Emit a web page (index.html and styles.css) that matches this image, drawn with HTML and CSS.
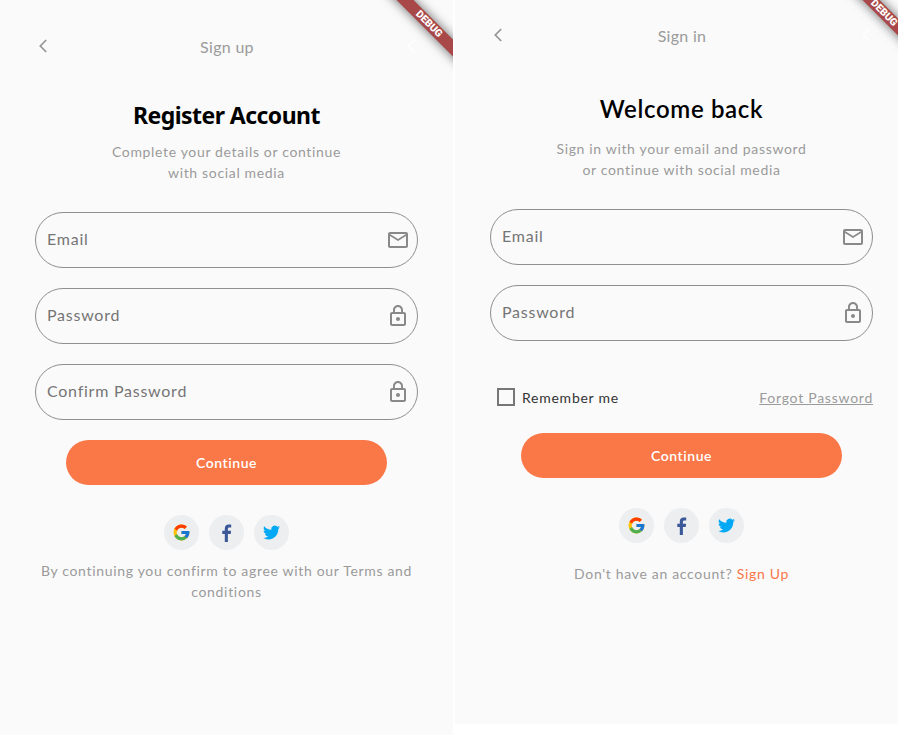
FILE: index.html
```
<!DOCTYPE html>
<html lang="en">
<head>
<meta charset="utf-8">
<title>Sign up and sign in</title>
<link rel="stylesheet" href="styles.css">
</head>
<body>
<svg class="defs" aria-hidden="true">
  <symbol id="back" viewBox="0 0 8 14"><path d="M7.2 1 1.3 7l5.9 6" fill="none" stroke="currentColor" stroke-width="1.7"/></symbol>
  <symbol id="mail" viewBox="0 0 24 24"><path fill="currentColor" d="M20 4H4c-1.100 0-1.990.9-1.990 2L2 18c0 1.100.9 2 2 2h16c1.100 0 2-.9 2-2V6c0-1.100-.9-2-2-2zm0 14H4V8l8 5 8-5v10zm-8-7L4 6h16l-8 5z"/></symbol>
  <symbol id="lock" viewBox="0 0 24 24"><path fill="currentColor" d="M12 17c1.100 0 2-.9 2-2s-.9-2-2-2-2 .9-2 2 .9 2 2 2zm6-9h-1V6c0-2.760-2.240-5-5-5S7 3.240 7 6v2H6c-1.100 0-2 .9-2 2v10c0 1.100.9 2 2 2h12c1.100 0 2-.9 2-2V10c0-1.100-.9-2-2-2zM8.900 6c0-1.710 1.390-3.100 3.100-3.100s3.100 1.390 3.100 3.100v2H8.900V6zM18 20H6V10h12v10z"/></symbol>
  <symbol id="google" viewBox="0 0 48 48"><path fill="#FFC107" d="M43.600 20H24v8h11.300C33.700 32.700 29.200 36 24 36c-6.600 0-12-5.400-12-12s5.400-12 12-12c3.100 0 5.800 1.200 8 3l5.700-5.700C34 6.100 29.300 4 24 4 13 4 4 13 4 24s9 20 20 20 20-9 20-20c0-1.300-.1-2.700-.4-4z"/><path fill="#FF3D00" d="m6.300 14.700 6.600 4.800C14.700 15.100 19 12 24 12c3.100 0 5.800 1.200 8 3l5.700-5.700C34 6.100 29.300 4 24 4 16.300 4 9.700 8.300 6.300 14.700z"/><path fill="#4CAF50" d="M24 44c5.200 0 9.900-2 13.400-5.200l-6.200-5.200C29.200 35.100 26.700 36 24 36c-5.200 0-9.600-3.300-11.300-8l-6.500 5C9.500 39.600 16.200 44 24 44z"/><path fill="#1976D2" d="M43.600 20H24v8h11.300a12 12 0 0 1-4.100 5.600l6.200 5.200C37 39.200 44 34 44 24c0-1.300-.1-2.700-.4-4z"/></symbol>
  <symbol id="facebook" viewBox="0 0 10 18"><path fill="#3b5999" d="M2.800 18V9.900H.3V6.700h2.500V4.400C2.800 1.800 4.300.4 6.700.4c1.100 0 2.100.1 2.500.1v2.900H7.500c-1.300 0-1.600.6-1.600 1.600v1.700h3.200l-.4 3.200H5.900V18z"/></symbol>
  <symbol id="twitter" viewBox="0 0 24 24"><path fill="#03a9f4" d="M23.950 4.570a10 10 0 0 1-2.820.77 4.960 4.960 0 0 0 2.160-2.720c-.95.550-2 .950-3.130 1.180a4.920 4.920 0 0 0-8.380 4.480C7.690 8.100 4.070 6.130 1.640 3.160a4.820 4.820 0 0 0-.67 2.480c0 1.710.87 3.210 2.190 4.100a4.900 4.900 0 0 1-2.230-.62v.06a4.920 4.920 0 0 0 3.950 4.830 5 5 0 0 1-2.210.08 4.940 4.940 0 0 0 4.600 3.420A9.870 9.870 0 0 1 0 19.540a13.990 13.990 0 0 0 7.560 2.210c9.050 0 14-7.500 14-13.980 0-.21 0-.42-.02-.63a9.940 9.940 0 0 0 2.410-2.570z"/></symbol>
</svg>
<main class="screens">
  <section class="panel">
    <div class="screen signup">
      <div class="ribbon"><span>DEBUG</span></div>
      <header class="bar">
        <svg class="back"><use href="#back"/></svg>
        <span class="bar-title">Sign up</span>
        <svg class="back ghost"><use href="#back"/></svg>
      </header>
      <h1 class="title title-strong">Register Account</h1>
      <p class="lead">Complete your details or continue<br>with social media</p>
      <form class="fields">
        <div class="field"><span>Email</span><svg><use href="#mail"/></svg></div>
        <div class="field"><span>Password</span><svg><use href="#lock"/></svg></div>
        <div class="field"><span>Confirm Password</span><svg><use href="#lock"/></svg></div>
      </form>
      <div class="button">Continue</div>
      <div class="social">
        <span class="chip"><svg class="g"><use href="#google"/></svg></span>
        <span class="chip"><svg class="f"><use href="#facebook"/></svg></span>
        <span class="chip"><svg class="t"><use href="#twitter"/></svg></span>
      </div>
      <p class="terms">By continuing you confirm to agree with our Terms and<br>conditions</p>
    </div>
  </section>
  <section class="panel panel-short">
    <div class="screen signin">
      <div class="ribbon"><span>DEBUG</span></div>
      <header class="bar">
        <svg class="back"><use href="#back"/></svg>
        <span class="bar-title">Sign in</span>
        <svg class="back ghost"><use href="#back"/></svg>
      </header>
      <h1 class="title">Welcome back</h1>
      <p class="lead">Sign in with your email and password<br>or continue with social media</p>
      <form class="fields">
        <div class="field"><span>Email</span><svg><use href="#mail"/></svg></div>
        <div class="field"><span>Password</span><svg><use href="#lock"/></svg></div>
      </form>
      <div class="options">
        <i class="box"></i><span class="remember">Remember me</span><span class="forgot">Forgot Password</span>
      </div>
      <div class="button">Continue</div>
      <div class="social">
        <span class="chip"><svg class="g"><use href="#google"/></svg></span>
        <span class="chip"><svg class="f"><use href="#facebook"/></svg></span>
        <span class="chip"><svg class="t"><use href="#twitter"/></svg></span>
      </div>
      <p class="terms">Don't have an account? <span class="link">Sign Up</span></p>
    </div>
  </section>
</main>
</body>
</html>
```
FILE: styles.css
```
* { box-sizing: border-box; }
body { margin: 0; background: #fff; font-family: Lato, "Open Sans", sans-serif; color: #9b9b9b; }
h1, p { margin: 0; font-weight: 400; }
svg { display: block; }
.defs { position: absolute; width: 0; height: 0; }
.screens { display: flex; gap: 2px; width: 898px; height: 735px; overflow: hidden; }
.panel { flex: 0 0 453px; height: 735px; background: #fafafa; overflow: hidden; }
.panel-short { flex: 0 0 443px; height: 724px; }
.screen { position: relative; width: 453px; height: 735px; overflow: hidden; display: flex; flex-direction: column; }
.signin { margin-top: -11px; }

.ribbon { position: absolute; left: 369px; top: 18px; width: 120px; height: 12px; transform: rotate(45deg); background: #a94849; box-shadow: 0 0 11px rgba(0, 0, 0, .6); display: flex; align-items: center; justify-content: center; color: #fff; font: 900 10.2px/12px Roboto, sans-serif; }

.bar { display: flex; align-items: center; justify-content: space-between; height: 24px; margin: 35px 38px 0 39px; }
.back { width: 8px; height: 14px; margin-top: -2px; color: #949494; }
.ghost { color: #fff; }
.bar-title { font-size: 16px; line-height: 24px; letter-spacing: .3px; }

.title { margin-top: 39px; height: 34px; text-align: center; color: #000; font-size: 24px; line-height: 34px; font-weight: 600; letter-spacing: .65px; }
.title-strong { font-family: "Noto Sans", sans-serif; font-weight: 700; font-size: 23px; letter-spacing: -.55px; }
.signin .title { margin-top: 44px; }
.lead { margin-top: 9px; text-align: center; font-size: 14px; line-height: 21px; letter-spacing: .66px; }
.signin .lead { margin-top: 12px; }

.fields { display: grid; gap: 20px; margin: 29px 35px 0; }
.field { display: flex; align-items: center; justify-content: space-between; height: 56px; padding: 0 7px 0 11px; border: 1px solid #8e8e8e; border-radius: 28px; font-size: 16px; letter-spacing: .75px; color: #757575; }
.field span { padding-bottom: 3px; }
.field svg { width: 24px; height: 24px; color: #898989; }
.button { align-self: center; width: 321px; height: 45px; margin-top: 20px; border-radius: 22.5px; background: #fa7748; color: #fff; display: flex; align-items: center; justify-content: center; font-size: 14px; font-weight: 600; letter-spacing: .55px; }
.social { display: flex; justify-content: center; gap: 10px; margin-top: 30px; }
.chip { width: 35px; height: 35px; border-radius: 50%; background: #eceef0; display: flex; align-items: center; justify-content: center; }
.g { width: 19px; height: 19px; }
.f { width: 10px; height: 18px; }
.t { width: 17px; height: 17px; }
.terms { margin-top: 10px; text-align: center; font-size: 14px; line-height: 21px; letter-spacing: .68px; }
.signin .terms { margin-top: 20px; }
.link { color: #fa7748; }

.options { display: flex; align-items: center; height: 24px; margin: 44px 35px 0 42px; font-size: 14px; letter-spacing: .75px; }
.box { width: 18px; height: 18px; border: 2px solid #767676; margin-right: 7px; }
.remember { color: #333; margin-right: auto; }
.forgot { text-decoration: underline; }
.signin .button { margin-top: 24px; }
```
